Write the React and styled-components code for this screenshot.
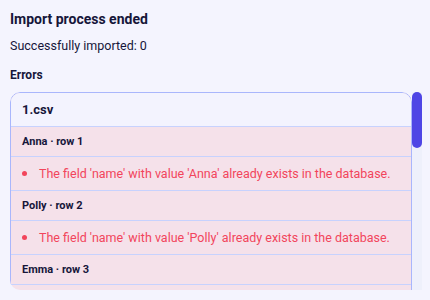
import React from 'react';
import styled, { createGlobalStyle } from 'styled-components';

const GlobalStyle = createGlobalStyle`
  html, body {
    margin: 0;
    padding: 0;
    background: #f4f4fe;
  }
  body {
    font-family: Roboto, "Liberation Sans", sans-serif;
    color: #16163a;
  }
`;

const Page = styled.div`
  display: flex;
  flex-direction: column;
  padding: 9px 8px 0 10px;
  height: 300px;
  box-sizing: border-box;
  overflow: hidden;
`;

const Title = styled.h2`
  margin: 0;
  font-size: 14px;
  line-height: 20px;
  font-weight: 700;
`;

const Summary = styled.p`
  margin: 7px 0 0;
  font-size: 12.5px;
  line-height: 20px;
`;

const SectionLabel = styled.h3`
  margin: 9px 0 0;
  font-size: 12px;
  line-height: 20px;
  font-weight: 700;
`;

const ScrollFrame = styled.div`
  margin-top: 7px;
  height: 198px;
  display: flex;
`;

const Viewport = styled.div`
  flex: 1;
  min-width: 0;
  overflow: hidden;
  border-radius: 10px 10px 0 10px;
`;

const ScrollTrack = styled.div`
  width: 10px;
  flex-shrink: 0;
  background: #eef0fb;
  display: flex;
  flex-direction: column;
`;

const ScrollThumb = styled.div`
  height: ${(p) => p.$size}px;
  background: #4f46e5;
  border-radius: 5px;
`;

const FileCard = styled.div`
  border: 1px solid #a9b6fc;
  border-radius: 10px;
  background: #f5e1ea;
  overflow: hidden;
`;

const FileHeader = styled.div`
  background: #f3f3fe;
  padding: 0 11px;
  height: 33px;
  display: flex;
  align-items: center;
  font-size: 13px;
  font-weight: 700;
  border-bottom: 1px solid #c7d2fe;
`;

const RowHeader = styled.div`
  padding: 0 11px;
  height: 29px;
  display: flex;
  align-items: center;
  font-size: 11px;
  font-weight: 700;
  border-bottom: 1px solid #c7d2fe;
`;

const ErrorList = styled.ul`
  margin: 0;
  padding: 0 11px;
  height: 33px;
  display: flex;
  flex-direction: column;
  justify-content: center;
  list-style: none;
  border-bottom: 1px solid #c7d2fe;
`;

const ErrorItem = styled.li`
  display: flex;
  align-items: center;
  gap: 12px;
  font-size: 12.5px;
  color: #f2455c;

  &::before {
    content: '';
    width: 5px;
    height: 5px;
    border-radius: 50%;
    background: #f2455c;
    flex-shrink: 0;
  }
`;

const rows = [
  { name: 'Anna', row: 1 },
  { name: 'Polly', row: 2 },
  { name: 'Emma', row: 3 },
];

export default function App() {
  return (
    <>
      <GlobalStyle />
      <Page>
        <Title>Import process ended</Title>
        <Summary>Successfully imported: 0</Summary>
        <SectionLabel>Errors</SectionLabel>
        <ScrollFrame>
          <Viewport>
            <FileCard>
              <FileHeader>1.csv</FileHeader>
              {rows.map(({ name, row }) => (
                <React.Fragment key={name}>
                  <RowHeader>{name} · row {row}</RowHeader>
                  <ErrorList>
                    <ErrorItem>
                      The field 'name' with value '{name}' already exists in the database.
                    </ErrorItem>
                  </ErrorList>
                </React.Fragment>
              ))}
            </FileCard>
          </Viewport>
          <ScrollTrack>
            <ScrollThumb $size={56} />
          </ScrollTrack>
        </ScrollFrame>
      </Page>
    </>
  );
}
